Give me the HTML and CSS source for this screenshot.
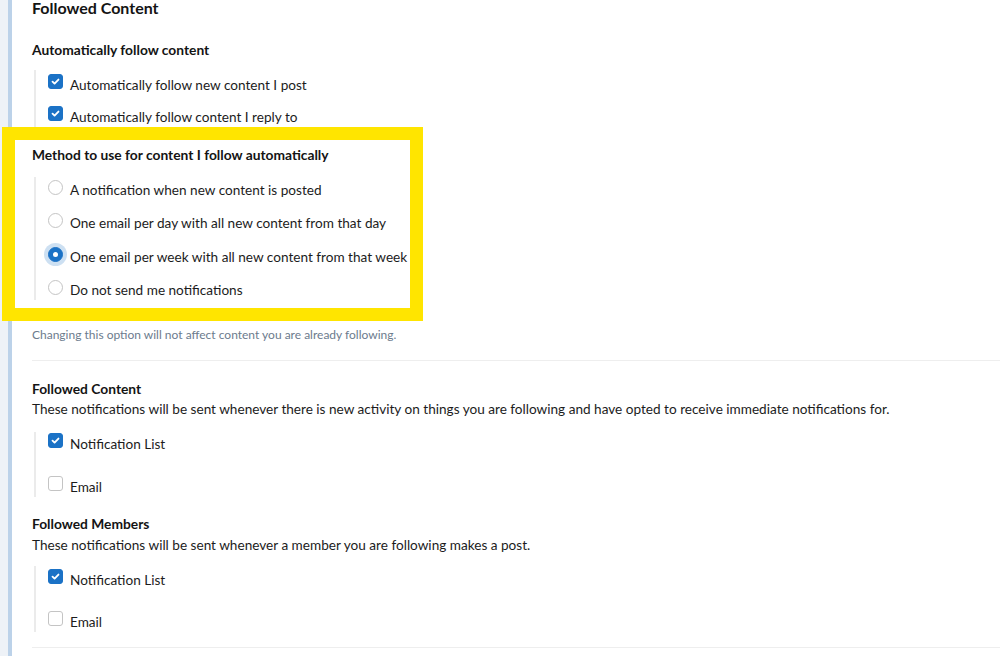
FILE: index.html
```html
<!DOCTYPE html>
<html>
<head>
<meta charset="utf-8">
<link rel="stylesheet" href="styles.css">
</head>
<body>
<div class="page">
  <div class="rail"></div>
  <div class="main">
    <h2 class="title">Followed Content</h2>

    <h3 class="sub sub-auto">Automatically follow content</h3>
    <ul class="opts opts-auto">
      <li class="opt"><span class="cb on"><svg viewBox="0 0 14 14"><path d="M3.8 7.2l2.2 2.1 4.2-4.4" fill="none" stroke="#fff" stroke-width="2" stroke-linecap="round" stroke-linejoin="round"/></svg></span><span>Automatically follow new content I post</span></li>
      <li class="opt"><span class="cb on"><svg viewBox="0 0 14 14"><path d="M3.8 7.2l2.2 2.1 4.2-4.4" fill="none" stroke="#fff" stroke-width="2" stroke-linecap="round" stroke-linejoin="round"/></svg></span><span>Automatically follow content I reply to</span></li>
    </ul>

    <h3 class="sub sub-method">Method to use for content I follow automatically</h3>
    <ul class="opts opts-radio">
      <li class="opt"><span class="rd"></span><span>A notification when new content is posted</span></li>
      <li class="opt"><span class="rd"></span><span>One email per day with all new content from that day</span></li>
      <li class="opt"><span class="rd on"></span><span>One email per week with all new content from that week</span></li>
      <li class="opt"><span class="rd"></span><span>Do not send me notifications</span></li>
    </ul>
    <p class="note">Changing this option will not affect content you are already following.</p>

    <hr class="sep">

    <h3 class="sub sub-fc">Followed Content</h3>
    <p class="desc">These notifications will be sent whenever there is new activity on things you are following and have opted to receive immediate notifications for.</p>
    <ul class="opts opts-notif">
      <li class="opt"><span class="cb on"><svg viewBox="0 0 14 14"><path d="M3.8 7.2l2.2 2.1 4.2-4.4" fill="none" stroke="#fff" stroke-width="2" stroke-linecap="round" stroke-linejoin="round"/></svg></span><span>Notification List</span></li>
      <li class="opt"><span class="cb"></span><span>Email</span></li>
    </ul>

    <h3 class="sub sub-fm">Followed Members</h3>
    <p class="desc desc-fm">These notifications will be sent whenever a member you are following makes a post.</p>
    <ul class="opts opts-notif opts-fm">
      <li class="opt"><span class="cb on"><svg viewBox="0 0 14 14"><path d="M3.8 7.2l2.2 2.1 4.2-4.4" fill="none" stroke="#fff" stroke-width="2" stroke-linecap="round" stroke-linejoin="round"/></svg></span><span>Notification List</span></li>
      <li class="opt"><span class="cb"></span><span>Email</span></li>
    </ul>

    <hr class="sep sep-end">
  </div>
  <div class="highlight"></div>
</div>
</body>
</html>
```
FILE: styles.css
```css
html, body {
  margin: 0;
  padding: 0;
  background: #fff;
}
body {
  font-family: Lato, "Noto Sans", sans-serif;
  color: #1c1c1c;
  font-size: 13.6px;
  width: 1000px;
  height: 656px;
  overflow: hidden;
}
.page {
  display: flex;
  position: relative;
  height: 656px;
}
.rail {
  width: 8px;
  background: #eef2f7;
  flex: none;
}
.main {
  flex: 1;
  border-left: 4px solid #bcd2e9;
  padding-left: 20px;
}
.title {
  margin: 0;
  font-size: 16px;
  line-height: 16px;
  font-weight: 700;
  color: #141414;
}
.sub {
  margin: 0;
  font-size: 13.8px;
  line-height: 20px;
  font-weight: 700;
  color: #141414;
}
.sub-auto { margin-top: 24px; }
.sub-method { margin-top: 15px; }
.sub-fc { margin-top: 18px; }
.sub-fm { margin-top: 17px; }

.opts {
  list-style: none;
  margin: 0 0 0 2px;
  padding: 0 0 0 12px;
  border-left: 2px solid #ebebeb;
  display: flex;
  flex-direction: column;
}
.opt {
  display: flex;
  align-items: flex-start;
  gap: 7px;
  line-height: 20px;
  height: 20px;
}
.opts-auto {
  margin-top: 10px;
  padding-top: 5px;
  padding-bottom: 3px;
  gap: 12px;
}
.opts-radio {
  margin-top: 12px;
  padding-top: 3px;
  gap: 13.3px;
}
.opts-notif {
  margin-top: 13px;
  padding-top: 2px;
  gap: 23px;
}
.opts-fm {
  margin-top: 11px;
  padding-top: 4px;
  gap: 22px;
}
.cb {
  width: 15px;
  height: 15px;
  box-sizing: border-box;
  border: 1px solid #c4c4c4;
  border-radius: 3px;
  background: #fff;
  margin-top: -1px;
  flex: none;
  display: flex;
}
.cb.on {
  background: #1b72c6;
  border-color: #1b72c6;
}
.cb svg {
  width: 13px;
  height: 13px;
}
.rd {
  width: 15px;
  height: 15px;
  box-sizing: border-box;
  border: 1px solid #c4c4c4;
  border-radius: 50%;
  background: #fff;
  margin-top: 0;
  flex: none;
}
.rd.on {
  background: #1b72c6;
  border-color: #1b72c6;
  box-shadow: 0 0 0 4px rgba(27, 114, 198, 0.22);
  display: flex;
  align-items: center;
  justify-content: center;
}
.rd.on::after {
  content: "";
  width: 5px;
  height: 5px;
  border-radius: 50%;
  background: #fff;
}
.note {
  margin: 27px 0 0;
  font-size: 12px;
  line-height: 16px;
  color: #6c7b8d;
}
.sep {
  margin: 17px 0 0;
  border: 0;
  border-top: 1px solid #eeeeee;
  height: 0;
}
.sep-end { margin-top: 15px; }
.desc {
  margin: 0;
  line-height: 20px;
  color: #1c1c1c;
}
.desc-fm { margin-top: 1px; }
.highlight {
  position: absolute;
  left: 2px;
  top: 127px;
  width: 421px;
  height: 194px;
  box-sizing: border-box;
  border: 13px solid #ffe500;
  pointer-events: none;
}
```
